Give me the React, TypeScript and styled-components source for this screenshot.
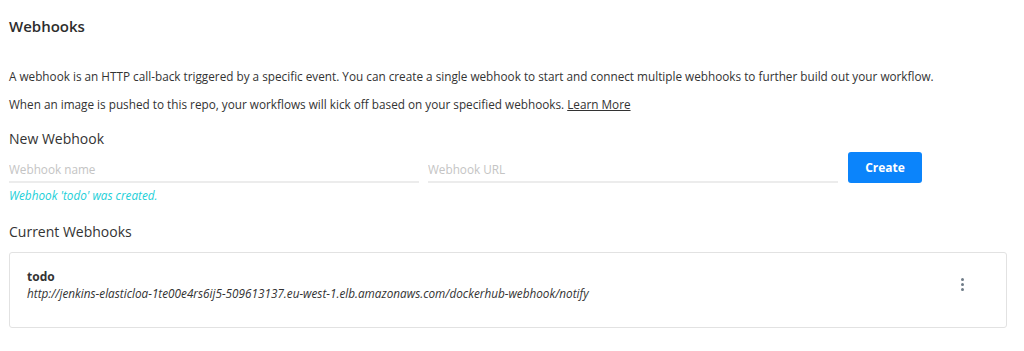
import React from "react";
import styled, { createGlobalStyle } from "styled-components";

const Global = createGlobalStyle`
  html, body { margin: 0; padding: 0; background: #fff; }
  body { font-family: "Open Sans", "Noto Sans", sans-serif; color: #333; }
  * { box-sizing: border-box; }
`;

const Page = styled.div`
  padding: 16px 17px 20px 9px;
`;

const Title = styled.h2`
  margin: 0;
  font-size: 15px;
  line-height: 20px;
  font-weight: 600;
  color: #2d2d2d;
`;

const Intro = styled.div`
  margin-top: 31px;
  display: flex;
  flex-direction: column;
  gap: 10px;
`;

const Para = styled.p`
  margin: 0;
  font-size: 11.75px;
  line-height: 18px;
  color: #333;
`;

const Link = styled.a`
  color: #333;
  text-decoration: underline;
`;

const SectionLabel = styled.h3<{ $top: number }>`
  margin: ${(p) => p.$top}px 0 0;
  font-size: 14px;
  line-height: 20px;
  font-weight: 400;
  color: #333;
`;

const FormRow = styled.div`
  margin-top: 3px;
  display: flex;
  align-items: stretch;
`;

const Input = styled.input`
  width: 410px;
  height: 31px;
  margin-right: 9px;
  padding: 4px 0 0;
  border: none;
  border-bottom: 2px solid #ececec;
  font-family: inherit;
  font-size: 11.75px;
  color: #333;
  outline: none;
  background: transparent;
  &::placeholder { color: #c4c4c4; }
`;

const CreateButton = styled.button`
  margin-left: 1px;
  width: 74px;
  height: 31px;
  border: none;
  border-radius: 3px;
  background: #0b84fb;
  color: #fff;
  font-family: inherit;
  font-size: 12px;
  font-weight: 700;
  cursor: pointer;
`;

const Success = styled.div`
  margin-top: 3px;
  font-size: 11.75px;
  line-height: 18px;
  font-style: italic;
  color: #22cfd8;
`;

const Card = styled.div`
  margin-top: 10px;
  border: 1px solid #e2e2e2;
  border-radius: 3px;
  padding: 16px 42px 25px 17px;
  display: flex;
  align-items: flex-start;
  justify-content: space-between;
`;

const HookInfo = styled.div`
  display: flex;
  flex-direction: column;
`;

const HookName = styled.div`
  font-size: 12px;
  line-height: 16px;
  font-weight: 700;
  color: #333;
`;

const HookUrl = styled.div`
  font-size: 11.75px;
  line-height: 17px;
  font-style: italic;
  color: #333;
`;

const Kebab = styled.button`
  margin-top: 9px;
  padding: 0;
  border: none;
  background: none;
  display: flex;
  flex-direction: column;
  gap: 2px;
  cursor: pointer;
`;

const Dot = styled.span`
  width: 3px;
  height: 3px;
  border-radius: 50%;
  background: #6f7c88;
`;

export default function App() {
  return (
    <>
      <Global />
      <Page>
        <Title>Webhooks</Title>
        <Intro>
          <Para>
            A webhook is an HTTP call-back triggered by a specific event. You can create a single webhook to start and connect multiple webhooks to further build out your workflow.
          </Para>
          <Para>
            When an image is pushed to this repo, your workflows will kick off based on your specified webhooks. <Link href="#">Learn More</Link>
          </Para>
        </Intro>
        <SectionLabel $top={16}>New Webhook</SectionLabel>
        <FormRow>
          <Input placeholder="Webhook name" />
          <Input placeholder="Webhook URL" />
          <CreateButton>Create</CreateButton>
        </FormRow>
        <Success>Webhook 'todo' was created.</Success>
        <SectionLabel $top={18}>Current Webhooks</SectionLabel>
        <Card>
          <HookInfo>
            <HookName>todo</HookName>
            <HookUrl>http://jenkins-elasticloa-1te00e4rs6ij5-509613137.eu-west-1.elb.amazonaws.com/dockerhub-webhook/notify</HookUrl>
          </HookInfo>
          <Kebab aria-label="More">
            <Dot />
            <Dot />
            <Dot />
          </Kebab>
        </Card>
      </Page>
    </>
  );
}
